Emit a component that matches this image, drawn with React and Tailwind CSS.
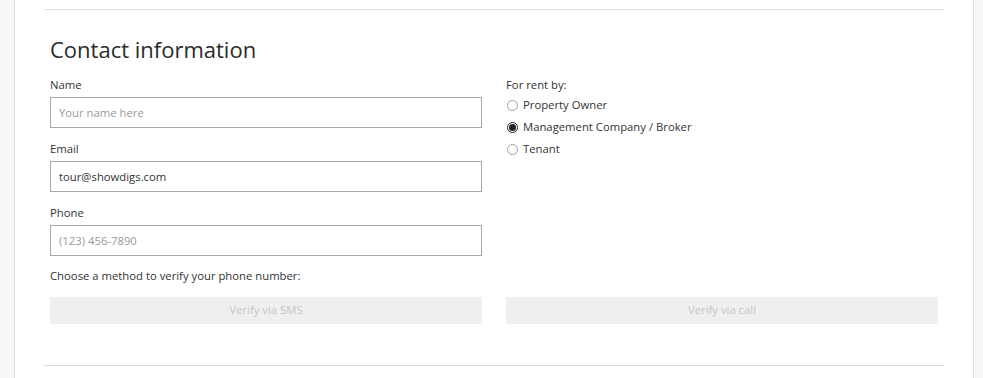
import React from 'react';

// Contact information form section
const Field = ({ label, placeholder, value }) => (
  <div className="mb-[13px]">
    <div className="text-[11.3px] leading-4 text-[#333] mb-1">{label}</div>
    <input
      type="text"
      readOnly
      defaultValue={value}
      placeholder={placeholder}
      className="block w-full h-[31px] border border-[#a9a9a9] bg-white px-2 text-[11.3px] text-[#333] placeholder:text-[#9a9a9a] outline-none"
    />
  </div>
);

const Radio = ({ label, checked }) => (
  <div className="flex items-center h-[22px]">
    <span
      className={`flex items-center justify-center w-[11px] h-[11px] rounded-full border ml-px ${
        checked ? 'border-[#222]' : 'border-[#a0a0a0]'
      }`}
    >
      {checked && <span className="w-[7px] h-[7px] rounded-full bg-[#222]" />}
    </span>
    <span className="ml-[5px] text-[11.3px] text-[#333]">{label}</span>
  </div>
);

export default function App() {
  return (
    <div
      className="flex h-[378px] w-[983px] bg-[#f7f7f8] overflow-hidden"
      style={{ fontFamily: '"Open Sans", "Noto Sans", sans-serif' }}
    >
      <div className="w-[14px] shrink-0" />
      <div className="w-[960px] shrink-0 bg-white border-l border-r border-[#dcdcdc] px-[29px] pt-[9px]">
        <div className="border-t border-[#dedede]" />

        <div className="px-[6px]">
          <h2 className="mt-[24px] text-[22px] leading-[30px] font-medium text-[#2b2b2b]">
            Contact information
          </h2>

          <div className="grid grid-cols-2 gap-x-6 mt-[13px]">
            <div>
              <Field label="Name" placeholder="Your name here" />
              <Field label="Email" value="tour@showdigs.com" />
              <Field label="Phone" placeholder="(123) 456-7890" />
            </div>
            <div>
              <div className="text-[11.3px] leading-4 text-[#333]">For rent by:</div>
              <div className="mt-[1px]">
                <Radio label="Property Owner" />
                <Radio label="Management Company / Broker" checked />
                <Radio label="Tenant" />
              </div>
            </div>
          </div>

          <div className="-mt-px text-[11.3px] leading-4 text-[#333]">
            Choose a method to verify your phone number:
          </div>
          <div className="grid grid-cols-2 gap-x-6 mt-[13px]">
            <button className="h-[27px] bg-[#efeff0] text-[11.3px] text-[#c4c4c6]">
              Verify via SMS
            </button>
            <button className="h-[27px] bg-[#efeff0] text-[11.3px] text-[#c4c4c6]">
              Verify via call
            </button>
          </div>
        </div>

        <div className="mt-[41px] border-t border-[#dedede]" />
      </div>
    </div>
  );
}
